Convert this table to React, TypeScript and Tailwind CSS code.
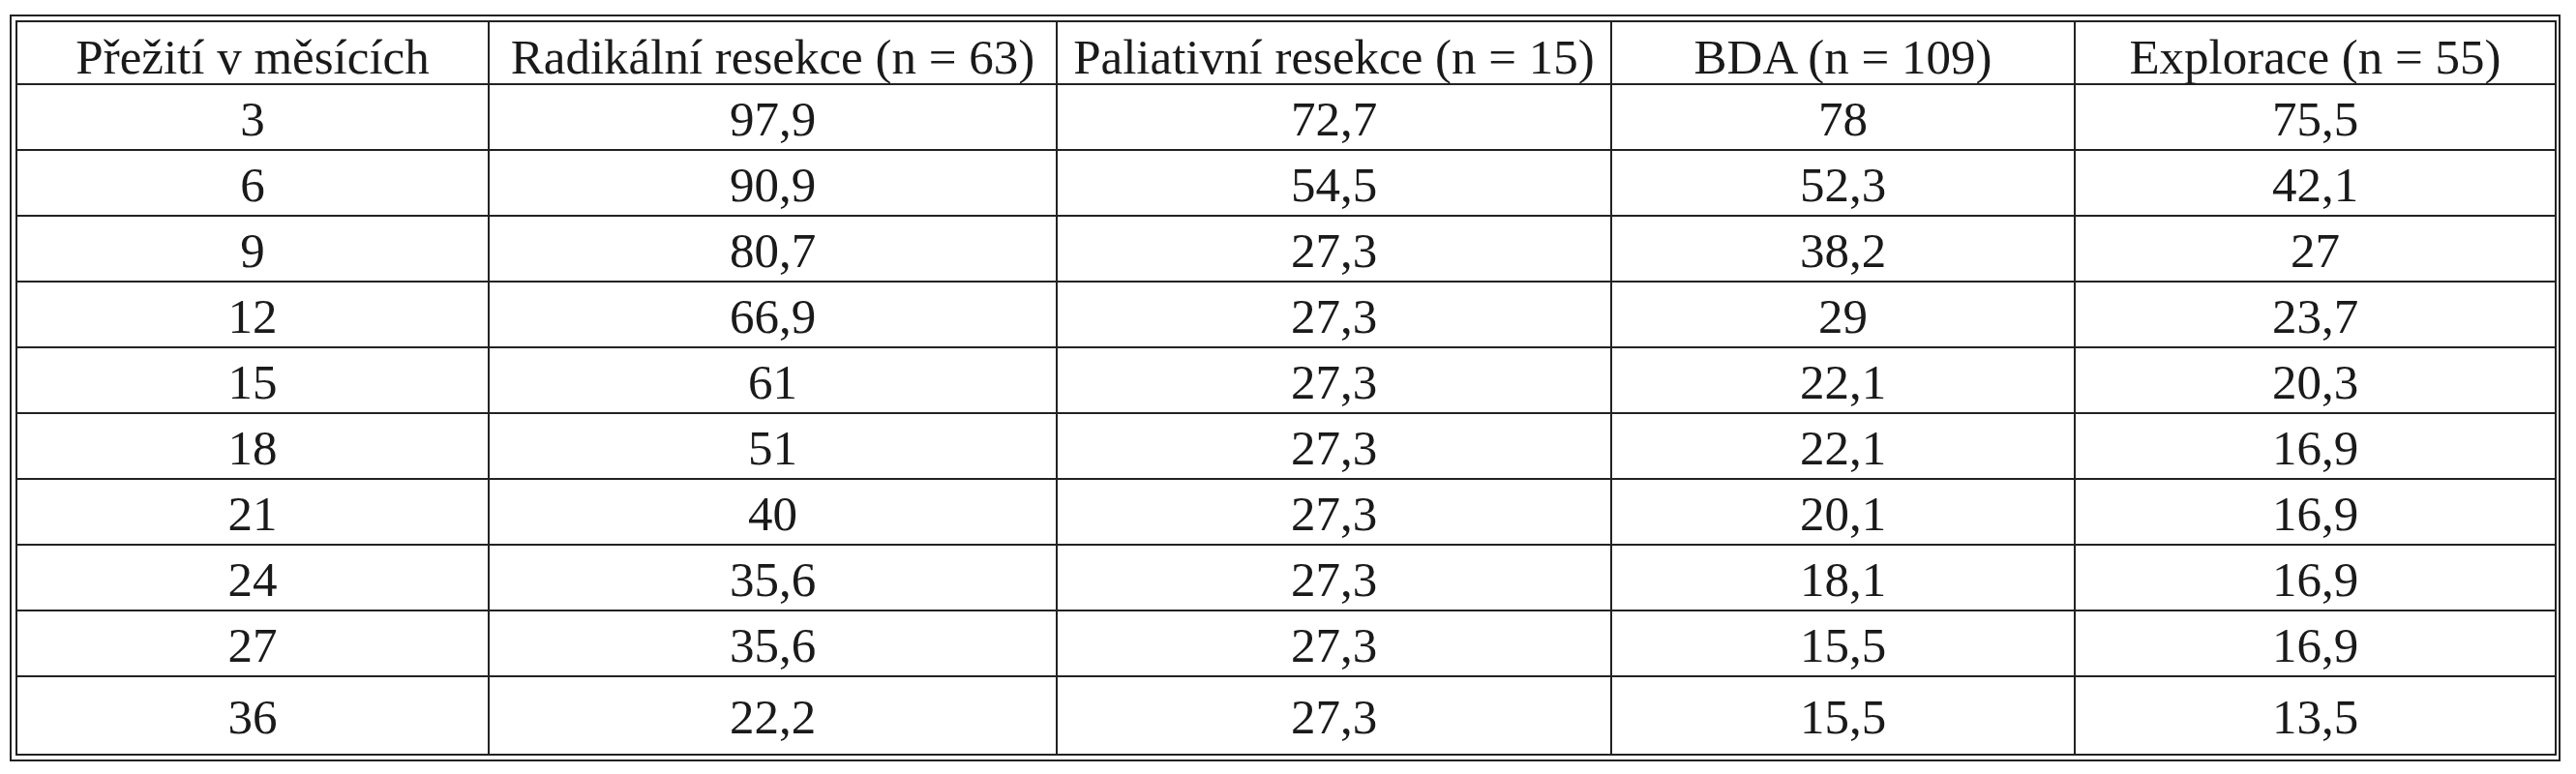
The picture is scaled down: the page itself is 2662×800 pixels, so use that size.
const headers = [
    "Přežití v měsících",
    "Radikální resekce (n = 63)",
    "Paliativní resekce (n = 15)",
    "BDA (n = 109)",
    "Explorace (n = 55)",
];

const rows: string[][] = [
    ["3", "97,9", "72,7", "78", "75,5"],
    ["6", "90,9", "54,5", "52,3", "42,1"],
    ["9", "80,7", "27,3", "38,2", "27"],
    ["12", "66,9", "27,3", "29", "23,7"],
    ["15", "61", "27,3", "22,1", "20,3"],
    ["18", "51", "27,3", "22,1", "16,9"],
    ["21", "40", "27,3", "20,1", "16,9"],
    ["24", "35,6", "27,3", "18,1", "16,9"],
    ["27", "35,6", "27,3", "15,5", "16,9"],
    ["36", "22,2", "27,3", "15,5", "13,5"],
];

const App: React.FC = () => {
    return (
        <div className="w-[2662px] h-[800px] bg-white pt-[15px] pl-[10px]">
            {/* Double frame round the table */}
            <div className="w-[2636px] border-2 border-[#222] p-[4px]">
                <table
                    className="w-full table-fixed border-collapse border-2 border-[#222] text-[51px] leading-none text-[#1a1a1a]"
                    style={{ fontFamily: '"Liberation Serif", "Times New Roman", serif' }}
                >
                    <colgroup>
                        <col className="w-[488px]" />
                        <col className="w-[587px]" />
                        <col className="w-[573px]" />
                        <col className="w-[479px]" />
                        <col className="w-[497px]" />
                    </colgroup>
                    <thead>
                        <tr className="h-[65px]">
                            {headers.map((h) => (
                                <th
                                    key={h}
                                    className="border-2 border-[#222] font-normal text-center align-middle pt-[9px] whitespace-nowrap"
                                >
                                    {h}
                                </th>
                            ))}
                        </tr>
                    </thead>
                    <tbody>
                        {rows.map((r, i) => (
                            <tr key={r[0]} className={i === rows.length - 1 ? "h-[81px]" : "h-[68px]"}>
                                {r.map((v, j) => (
                                    <td key={j} className="border-2 border-[#222] text-center align-middle pt-[4px]">
                                        {v}
                                    </td>
                                ))}
                            </tr>
                        ))}
                    </tbody>
                </table>
            </div>
        </div>
    );
};

export default App;
